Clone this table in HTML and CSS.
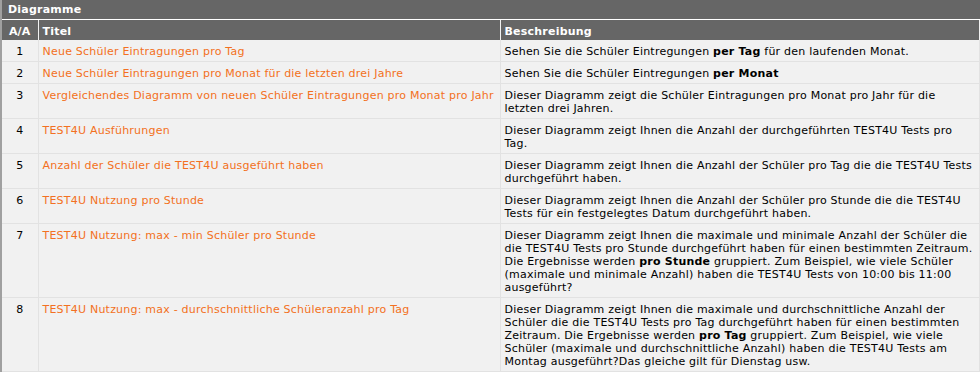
FILE: index.html
```html
<!DOCTYPE html>
<html>
<head>
<meta charset="utf-8">
<link rel="stylesheet" href="styles.css">
</head>
<body>
<div class="panel">
  <div class="panel-title">Diagramme</div>
  <table class="grid">
    <colgroup><col class="c-num"><col class="c-title"><col class="c-desc"></colgroup>
    <thead>
      <tr><th class="num">A/A</th><th>Titel</th><th>Beschreibung</th></tr>
    </thead>
    <tbody>
      <tr><td class="num">1</td><td><a href="#">Neue Schüler Eintragungen pro Tag</a></td><td>Sehen Sie die Schüler Eintregungen <b>per Tag</b> für den laufenden Monat.</td></tr>
      <tr><td class="num">2</td><td><a href="#">Neue Schüler Eintragungen pro Monat für die letzten drei Jahre</a></td><td>Sehen Sie die Schüler Eintregungen <b>per Monat</b></td></tr>
      <tr><td class="num">3</td><td><a href="#">Vergleichendes Diagramm von neuen Schüler Eintragungen pro Monat pro Jahr</a></td><td>Dieser Diagramm zeigt die Schüler Eintragungen pro Monat pro Jahr für die letzten drei Jahren.</td></tr>
      <tr><td class="num">4</td><td><a href="#">TEST4U Ausführungen</a></td><td>Dieser Diagramm zeigt Ihnen die Anzahl der durchgeführten TEST4U Tests pro Tag.</td></tr>
      <tr><td class="num">5</td><td><a href="#">Anzahl der Schüler die TEST4U ausgeführt haben</a></td><td>Dieser Diagramm zeigt Ihnen die Anzahl der Schüler pro Tag die die TEST4U Tests durchgeführt haben.</td></tr>
      <tr><td class="num">6</td><td><a href="#">TEST4U Nutzung pro Stunde</a></td><td>Dieser Diagramm zeigt Ihnen die Anzahl der Schüler pro Stunde die die TEST4U Tests für ein festgelegtes Datum durchgeführt haben.</td></tr>
      <tr><td class="num">7</td><td><a href="#">TEST4U Nutzung: max - min Schüler pro Stunde</a></td><td>Dieser Diagramm zeigt Ihnen die maximale und minimale Anzahl der Schüler die die TEST4U Tests pro Stunde durchgeführt haben für einen bestimmten Zeitraum. Die Ergebnisse werden <b>pro Stunde</b> gruppiert. Zum Beispiel, wie viele Schüler (maximale und minimale Anzahl) haben die TEST4U Tests von 10:00 bis 11:00 ausgeführt?</td></tr>
      <tr><td class="num">8</td><td><a href="#">TEST4U Nutzung: max - durchschnittliche Schüleranzahl pro Tag</a></td><td>Dieser Diagramm zeigt Ihnen die maximale und durchschnittliche Anzahl der Schüler die die TEST4U Tests pro Tag durchgeführt haben für einen bestimmten Zeitraum. Die Ergebnisse werden <b>pro Tag</b> gruppiert. Zum Beispiel, wie viele Schüler (maximale und durchschnittliche Anzahl) haben die TEST4U Tests am Montag ausgeführt?Das gleiche gilt für Dienstag usw.</td></tr>
    </tbody>
  </table>
</div>
</body>
</html>
```

FILE: styles.css
```css
html, body {
  margin: 0;
  padding: 0;
  background: #ffffff;
}
body {
  font-family: "DejaVu Sans", Verdana, sans-serif;
  font-size: 11px;
  line-height: 13px;
  letter-spacing: 0.22px;
  color: #000000;
}
.panel {
  width: 978px;
  border-left: 2px solid #a0a0a0;
  background: #f1f1f1;
}
.panel-title {
  background: #666666;
  color: #ffffff;
  font-weight: bold;
  padding: 3px 6px 3px;
  border-bottom: 1px solid #ffffff;
}
.grid {
  width: 100%;
  border-collapse: collapse;
  table-layout: fixed;
}
.c-num { width: 36px; }
.c-title { width: 462px; }
.grid th {
  background: #666666;
  color: #ffffff;
  font-weight: bold;
  text-align: left;
  padding: 5px 4px 2px;
  border-left: 1px solid #f1f1f1;
  border-right: 1px solid #f1f1f1;
  white-space: nowrap;
}
.grid th:first-child { border-left: none; }
.grid td {
  vertical-align: top;
  padding: 5px 4px 3px;
  border: 1px solid #e2e2e2;
  border-top: none;
}
.grid td:first-child { border-left: none; }
.grid .num { text-align: center; padding-left: 2px; padding-right: 2px; }
.grid a {
  color: #f37021;
  text-decoration: none;
}
```
